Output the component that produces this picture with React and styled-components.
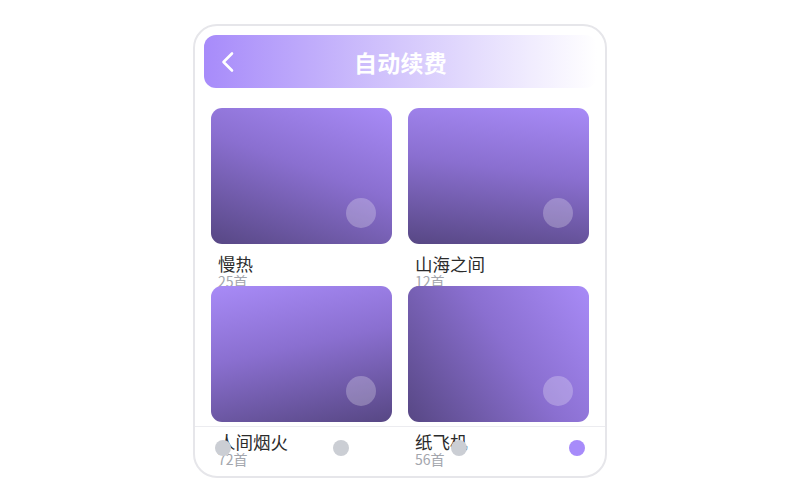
import React from 'react'
import styled, { createGlobalStyle } from 'styled-components'

const GlobalStyle = createGlobalStyle`
body {
  margin: 0;
  background: #ffffff;
  font-family: "Noto Sans CJK SC", "Noto Sans", sans-serif;
}
`

const Page = styled.div`
height: 500px;
display: flex;
align-items: center;
justify-content: center;
`

const Phone = styled.div`
position: relative;
margin-top: 2px;
width: 410px;
height: 450px;
border: 2px solid #e6e6ea;
border-radius: 24px;
background: #ffffff;
overflow: hidden;
`

const Header = styled.div`
margin: 9px 8px 0 9px;
height: 53px;
border-radius: 12px;
background: linear-gradient(90deg, #a78bfa 0%, #d4c7fc 50%, #ffffff 100%);
display: grid;
grid-template-columns: 44px 1fr 44px;
align-items: center;
`

const BackButton = styled.div`
display: flex;
align-items: center;
padding-left: 13px;
`

const Title = styled.h1`
margin: 0;
text-align: center;
color: #ffffff;
font-size: 23px;
font-weight: 700;
letter-spacing: 0.3px;
`

const Grid = styled.div`
display: grid;
grid-template-columns: 181px 181px;
column-gap: 16px;
padding: 20px 16px 0;
`

const Item = styled.div`
height: 178px;
`

const Cover = styled.div`
position: relative;
height: 136px;
border-radius: 11px;
background: linear-gradient(${p => p.angle}deg, #a88bf7 0%, #8a6fd0 45%, #574784 100%);
`

const Play = styled.span`
position: absolute;
right: 16px;
bottom: 16px;
width: 30px;
height: 30px;
border-radius: 50%;
background: rgba(255, 255, 255, 0.25);
`

const Name = styled.div`
margin-top: 9px;
padding-left: 7px;
font-size: 17.5px;
line-height: 22px;
color: #2b2b2b;
`

const Count = styled.div`
margin-top: -3px;
padding-left: 7px;
font-size: 14px;
line-height: 18px;
color: #a3a6ad;
`

const Nav = styled.div`
position: absolute;
left: 0;
right: 0;
bottom: 0;
height: 50px;
box-sizing: border-box;
padding: 0 20px 8px;
border-top: 1px solid #ececf0;
display: flex;
align-items: center;
justify-content: space-between;
`

const Dot = styled.span`
width: 16px;
height: 16px;
border-radius: 50%;
background: ${p => (p.active ? '#a78bfa' : '#cbced4')};
`

const playlists = [
  { name: '慢热', count: 25, angle: 200 },
  { name: '山海之间', count: 12, angle: 188 },
  { name: '人间烟火', count: 72, angle: 168 },
  { name: '纸飞机', count: 56, angle: 235 },
]

const App = () => {
  return (
    <Page>
      <GlobalStyle />
      <Phone>
        <Header>
          <BackButton>
            <svg width="24" height="24" viewBox="0 0 24 24" fill="none">
              <polyline points="15 3.5 6.5 12 15 20.5" stroke="#ffffff" strokeWidth="2.6" strokeLinecap="round" strokeLinejoin="round" />
            </svg>
          </BackButton>
          <Title>自动续费</Title>
          <div />
        </Header>
        <Grid>
          {playlists.map(p => (
            <Item key={p.name}>
              <Cover angle={p.angle}>
                <Play />
              </Cover>
              <Name>{p.name}</Name>
              <Count>{p.count}首</Count>
            </Item>
          ))}
        </Grid>
        <Nav>
          <Dot />
          <Dot />
          <Dot />
          <Dot active />
        </Nav>
      </Phone>
    </Page>
  )
}

export default App
